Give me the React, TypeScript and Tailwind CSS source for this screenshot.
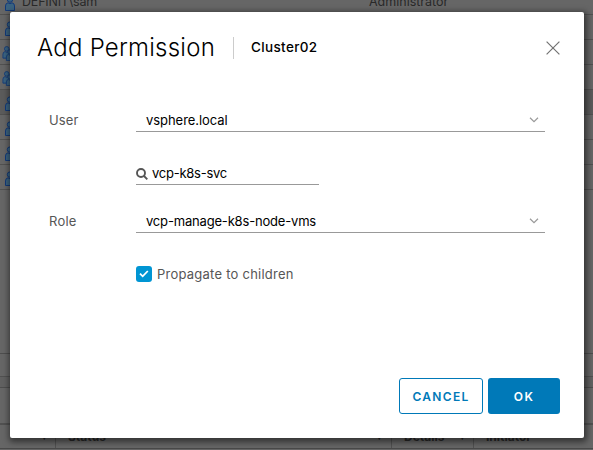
import React from "react";

function Person({ group = false }: { group?: boolean }) {
  const figure = (
    <>
      <circle cx="5" cy="3.6" r="2.7" />
      <path d="M.5 14.5V10Q.5 7.2 3 6.8l2 1 2-1q2.500.4 2.500 3.200v4.500Z" />
    </>
  );
  return (
    <svg
      className={group ? "ml-[2px] shrink-0" : "ml-[5px] shrink-0"}
      width="16"
      height="15"
      viewBox="0 0 16 15"
      fill="#3b6380"
      stroke="#123a7a"
      strokeWidth="1"
    >
      {group && <g transform="translate(.5 -.2) scale(.85)">{figure}</g>}
      <g transform={group ? "translate(4 3) scale(.8)" : undefined}>{figure}</g>
    </svg>
  );
}

const rows = ["single", "group", "group", "selected", "single", "single", "single"];

function Background() {
  return (
    <div className="flex h-full flex-col overflow-hidden bg-[#666666] text-[13px] text-[#292929]">
      <div className="flex h-[15px] shrink-0 items-end border-b border-[#515151] pb-[3px]">
        <Person />
        <span className="mb-[1px] ml-[1px] w-[347px] text-[12.500px] leading-[16px] tracking-[-0.2px]">DEFINIT\sam</span>
        <span className="mb-[1px] text-[12.500px] leading-[16px]">Administrator</span>
      </div>
      {rows.map((kind, i) => (
        <div
          key={i}
          className={`flex h-[25px] shrink-0 items-end border-b border-[#515151] pb-[3px] ${kind === "selected" ? "bg-[#5b5b5b]" : ""}`}
        >
          <Person group={kind === "group"} />
        </div>
      ))}
      <div className="h-[164px] shrink-0 border-b border-[#4e4e4e]" />
      <div className="h-[23px] shrink-0 border-b border-[#515151]" />
      <div className="h-[11px] shrink-0 border-b border-[#4e4e4e] bg-[#616161]" />
      <div className="h-[37px] shrink-0 border-b-2 border-[#515151]" />
      <div className="flex h-[24px] shrink-0 items-end border-b border-[#494949] pb-[3px] text-[12px] font-bold leading-[16px]">
        <span className="w-[55px] pl-[42px] text-[9px]">▾</span>
        <span className="-mb-[3px] h-[24px] border-l border-[#515151]" />
        <span className="w-[321px] pl-[12px]">Status</span>
        <span className="w-[14px] text-[9px]">▾</span>
        <span className="-mb-[3px] h-[24px] border-l border-[#515151]" />
        <span className="w-[68px] pl-[12px]">Details</span>
        <span className="w-[13px] text-[9px]">▾</span>
        <span className="-mb-[3px] h-[24px] border-l border-[#515151]" />
        <span className="pl-[12px]">Initiator</span>
      </div>
    </div>
  );
}

function Chevron() {
  return (
    <svg className="mr-[6px]" width="10" height="6" viewBox="0 0 10 6" fill="none" stroke="#9a9a9a" strokeWidth="1.200">
      <path d="M1 .8 5 4.700 9 .8" />
    </svg>
  );
}

function Select({ value, className }: { value: string; className: string }) {
  return (
    <div className="flex h-[24px] w-[409px] items-center justify-between border-b border-[#999999] pl-[10px] text-black">
      <span className={className}>{value}</span>
      <Chevron />
    </div>
  );
}

export default function App() {
  return (
    <div className="relative h-[450px] w-[593px] overflow-hidden font-['Inter','Liberation_Sans',sans-serif]">
      <Background />
      <div className="absolute left-[10px] top-[12px] flex h-[426px] w-[574px] flex-col rounded-[2px] bg-white text-[13px] leading-[16px] text-[#565656] shadow-[1px_2px_6px_2px_rgba(0,0,0,0.5)]">
        <header className="flex h-[72px] shrink-0 items-center pl-[27px] pr-[24px] text-black">
          <h1 className="w-[196px] whitespace-nowrap text-[24px] font-light leading-[30px] tracking-[0.24px]">Add Permission</h1>
          <div className="h-[22px] border-l border-[#cccccc]" />
          <span className="relative -top-[1px] ml-[17px] text-[13.500px] font-medium tracking-[0.35px]">Cluster02</span>
          <svg className="ml-auto" width="14" height="14" viewBox="0 0 14 14" fill="none" stroke="#737373" strokeWidth="1.200">
            <path d="m.6.6 12.800 12.800M13.400.6.6 13.400" />
          </svg>
        </header>
        <main className="flex grow flex-col pl-[39px]">
          <div className="mt-[24px] flex items-center">
            <span className="w-[87px] tracking-[0.1px]">User</span>
            <Select value="vsphere.local" className="tracking-[-0.05px]" />
          </div>
          <div className="ml-[87px] mt-[29px] flex h-[24px] w-[183px] items-center border-b border-[#999999] text-black">
            <svg className="mt-[2px]" width="12" height="12" viewBox="0 0 12 12" fill="none" stroke="#565656" strokeWidth="1.900">
              <circle cx="5" cy="5" r="4" />
              <path d="m8 8 3.300 3.300" />
            </svg>
            <span className="ml-[4px] tracking-[-0.25px]">vcp-k8s-svc</span>
          </div>
          <div className="mt-[24px] flex items-center">
            <span className="w-[87px] tracking-[0.25px]">Role</span>
            <Select value="vcp-manage-k8s-node-vms" className="tracking-[-0.18px]" />
          </div>
          <label className="ml-[87px] mt-[33px] flex h-[16px] items-center">
            <span className="flex size-[16px] items-center justify-center rounded-[3px] bg-[#0095d3]">
              <svg width="10" height="8" viewBox="0 0 10 8" fill="none" stroke="white" strokeWidth="1.800">
                <path d="m1 3.700 2.700 2.600L8.800 1" />
              </svg>
            </span>
            <span className="ml-[5px] tracking-[0.24px]">Propagate to children</span>
          </label>
        </main>
        <footer className="flex justify-end gap-[5px] pb-[24px] pr-[24px] text-[12px] font-semibold tracking-[1.300px]">
          <button className="h-[36px] w-[84px] rounded-[3px] border border-[#0079b8] pt-[1px] text-[#0079b8]">CANCEL</button>
          <button className="h-[36px] w-[72px] rounded-[3px] bg-[#0079b8] pt-[1px] text-white">OK</button>
        </footer>
      </div>
    </div>
  );
}
